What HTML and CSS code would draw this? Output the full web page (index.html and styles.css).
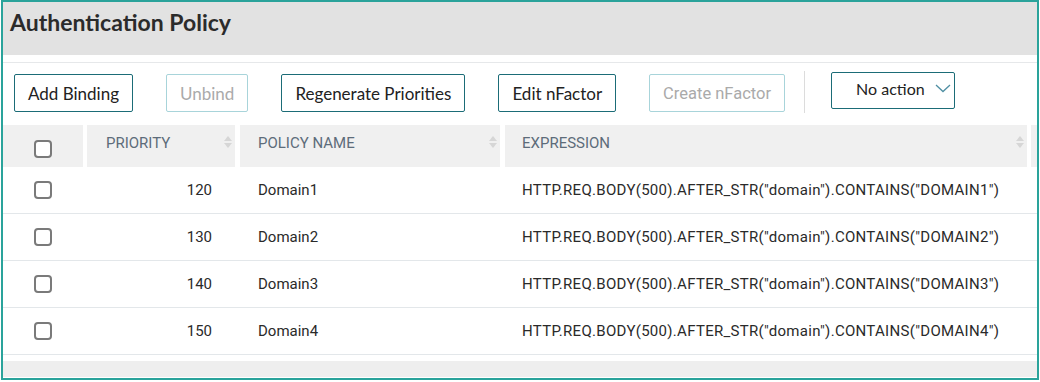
FILE: index.html
```html
<!DOCTYPE html>
<html lang="en">
  <head>
    <meta charset="UTF-8" />
    <title>Authentication Policy</title>
    <link rel="stylesheet" href="styles.css">
  </head>
  <body>
    <div class="frame">
      <div class="title-bar">
        <h1>Authentication Policy</h1>
      </div>

      <div class="toolbar">
        <button class="btn">Add Binding</button>
        <button class="btn" disabled>Unbind</button>
        <button class="btn">Regenerate Priorities</button>
        <button class="btn">Edit nFactor</button>
        <button class="btn btn-roboto" disabled>Create nFactor</button>
        <span class="divider"></span>
        <button class="btn select">
          <span>No action</span>
          <svg width="16" height="10" viewBox="0 0 16 10">
            <polyline points="1,2 8,8.5 15,2" fill="none" stroke="#4f8fa3" stroke-width="1.3" />
          </svg>
        </button>
      </div>

      <div class="grid-head">
        <div class="hcell check-col"><span class="box"></span></div>
        <div class="hcell prio-col">PRIORITY <i class="sort"></i></div>
        <div class="hcell name-col">POLICY NAME <i class="sort"></i></div>
        <div class="hcell expr-col">EXPRESSION <i class="sort"></i></div>
        <div class="hcell tail-col"></div>
      </div>

      <div class="grid-row">
        <div class="cell check-col"><span class="box"></span></div>
        <div class="cell prio-col num">120</div>
        <div class="cell name-col">Domain1</div>
        <div class="cell expr-col">HTTP.REQ.BODY(500).AFTER_STR("domain").CONTAINS("DOMAIN1")</div>
      </div>
      <div class="grid-row">
        <div class="cell check-col"><span class="box"></span></div>
        <div class="cell prio-col num">130</div>
        <div class="cell name-col">Domain2</div>
        <div class="cell expr-col">HTTP.REQ.BODY(500).AFTER_STR("domain").CONTAINS("DOMAIN2")</div>
      </div>
      <div class="grid-row">
        <div class="cell check-col"><span class="box"></span></div>
        <div class="cell prio-col num">140</div>
        <div class="cell name-col">Domain3</div>
        <div class="cell expr-col">HTTP.REQ.BODY(500).AFTER_STR("domain").CONTAINS("DOMAIN3")</div>
      </div>
      <div class="grid-row">
        <div class="cell check-col"><span class="box"></span></div>
        <div class="cell prio-col num">150</div>
        <div class="cell name-col">Domain4</div>
        <div class="cell expr-col">HTTP.REQ.BODY(500).AFTER_STR("domain").CONTAINS("DOMAIN4")</div>
      </div>

      <div class="footer-band"></div>
    </div>
  </body>
</html>
```

FILE: styles.css
```css
body {
  margin: 0;
  background: #ffffff;
  font-family: Lato, "Liberation Sans", sans-serif;
}

.frame {
  box-sizing: border-box;
  width: 1038px;
  height: 380px;
  margin-left: 1px;
  border: 2px solid #2aa39b;
  background: #ffffff;
  overflow: hidden;
}

.title-bar {
  height: 53px;
  background: #e2e2e2;
  padding-left: 7px;
  box-sizing: border-box;
  padding-top: 6px;
  margin-bottom: 7px;
}

h1 {
  margin: 0;
  font-size: 23px;
  font-weight: bold;
  color: #2b2b2b;
  line-height: 29px;
}

.toolbar {
  border-top: 1px solid #e6e8ea;
  height: 63px;
  box-sizing: border-box;
  display: flex;
  align-items: flex-start;
  padding-top: 11px;
  padding-left: 11px;
}

.btn {
  height: 38px;
  padding: 0 13px;
  margin-right: 33px;
  background: #ffffff;
  border: 1.5px solid #1b6c77;
  border-radius: 2px;
  font-family: Lato, "Liberation Sans", sans-serif;
  font-size: 17px;
  color: #222222;
  white-space: nowrap;
}

.btn:disabled {
  border-color: #a8d4da;
  color: #aaaaaa;
}

.btn-roboto {
  font-family: Roboto, sans-serif;
  font-size: 16.5px;
  margin-right: 19px;
}

.divider {
  width: 1px;
  height: 42px;
  margin-top: -3px;
  background: #dcdcdc;
  margin-right: 26px;
}

.select {
  box-sizing: border-box;
  height: 37px;
  margin-top: -2px;
  width: 124px;
  padding: 0 0 5px 24px;
  display: flex;
  align-items: center;
  gap: 10px;
  margin-right: 0;
  font-size: 16px;
}

.grid-head,
.grid-row {
  display: grid;
  grid-template-columns: 84px 153px 265px 526px 1fr;
}

.grid-head {
  height: 42px;
}

.hcell {
  background: #f0f0f0;
  display: flex;
  align-items: center;
  font-family: Roboto, sans-serif;
  font-size: 15px;
  color: #5d6c7a;
  position: relative;
  padding-bottom: 7px;
  box-sizing: border-box;
}

.check-col {
  justify-content: center;
  margin-right: 4px;
  padding-left: 0;
}

.hcell.check-col {
  padding-bottom: 0;
  padding-top: 6px;
}

.prio-col {
  margin-right: 5px;
  padding-left: 19px;
}

.name-col {
  margin-right: 5px;
  padding-left: 18px;
}

.expr-col {
  margin-right: 4px;
  padding-left: 17px;
}

.tail-col {
  margin-right: 0;
}

.sort {
  position: absolute;
  right: 3px;
  top: 10px;
  width: 8px;
  height: 14px;
}

.sort::before,
.sort::after {
  content: "";
  position: absolute;
  left: 0;
  border-left: 4px solid transparent;
  border-right: 4px solid transparent;
}

.sort::before {
  top: 1px;
  border-bottom: 5px solid #d6d6d6;
}

.sort::after {
  top: 8px;
  border-top: 5px solid #d6d6d6;
}

.box {
  box-sizing: border-box;
  width: 18px;
  height: 18px;
  border: 2px solid #7a7a7a;
  border-radius: 4px;
  background: #ffffff;
}

.grid-row {
  height: 47px;
  border-bottom: 1px solid #e3e7ea;
  box-sizing: border-box;
}

.cell {
  display: flex;
  align-items: center;
  font-family: Roboto, sans-serif;
  font-size: 15px;
  color: #2a2a2a;
  padding-bottom: 1px;
}

.cell.expr-col {
  letter-spacing: 0.3px;
}

.cell.num {
  justify-content: flex-end;
  padding-right: 23px;
  padding-left: 0;
}

.footer-band {
  margin-top: 6px;
  height: 16px;
  background: #eeeeee;
}
```
